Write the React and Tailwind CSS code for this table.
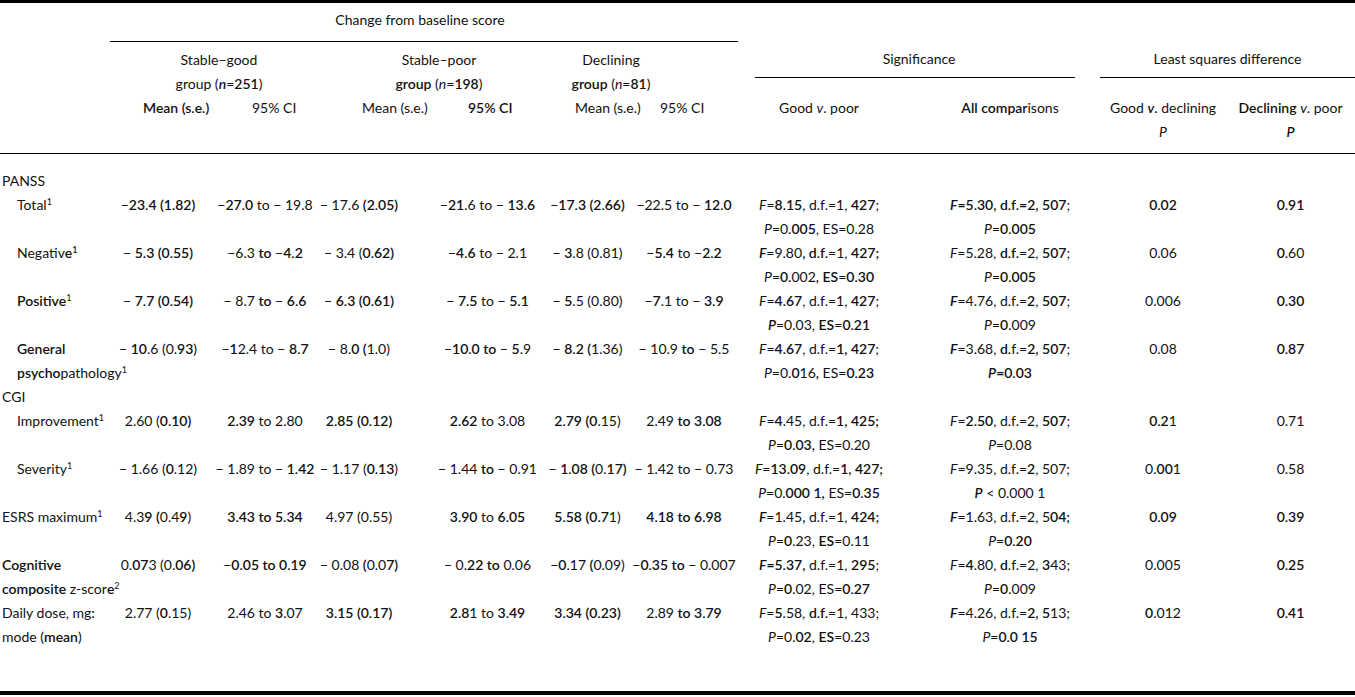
import React from 'react';

// tiny markup: **bold**, _italic_, ^1 superscript
function sup(str, k) {
  return str.split(/(\^\d)/g).map((p, i) =>
    /^\^\d$/.test(p) ? <sup key={k + '-' + i} className="text-[9px]">{p.slice(1)}</sup> : p
  );
}

function ital(str, k) {
  return str.split(/(_[^_]+_)/g).map((p, i) =>
    /^_[^_]+_$/.test(p) ? (
      <i key={k + '-' + i}>{sup(p.slice(1, -1), k + '-' + i)}</i>
    ) : (
      <React.Fragment key={k + '-' + i}>{sup(p, k + '-' + i)}</React.Fragment>
    )
  );
}

function rich(str) {
  if (!str) return null;
  return str.split(/(\*\*[^*]+\*\*)/g).map((p, i) =>
    /^\*\*[^*]+\*\*$/.test(p) ? (
      <b key={i} className="font-semibold">{ital(p.slice(2, -2), 'b' + i)}</b>
    ) : (
      <React.Fragment key={i}>{ital(p, 'n' + i)}</React.Fragment>
    )
  );
}

const rows = [
  { group: 'PANSS' },
  {
    label: ['Total^1'], indent: true,
    c: ['−**23.4 (1.82)**', '−**27.0** to − 19.8', '− 17.6 **(2.05)**', '−**21.**6 to − **13.6**', '−**17.3 (2.66)**', '−22.5 to − **12.0**'],
    s1: ['_F_=**8.15**, d.f.=1, **427**;', '_P_=0.**005**, ES=0.28'],
    s2: ['**_F_=5.30, d.f.=2, 507**;', '_P_=**0.005**'],
    p1: '**0.02**', p2: '**0.91**',
  },
  {
    label: ['Negativ**e^1**'], indent: true,
    c: ['− **5.3 (0.55)**', '−6.3 **to** −**4.2**', '− 3.4 (**0.62)**', '−**4.6** to − 2.1', '− **3**.8 (0.81)', '−**5.4** to −**2.2**'],
    s1: ['**_F_**=9.80**, d.f.**=1, **427;**', '_P_=**0.**002**, ES**=**0.30**'],
    s2: ['_F_=5.28, **d.f.**=2, **507**;', '_P_=**0.005**'],
    p1: '0.06', p2: '**0**.60',
  },
  {
    label: ['**Positive**^1'], indent: true,
    c: ['− **7.7 (0.54)**', '− 8.7 **to** − **6.6**', '− **6.3 (0.61)**', '− **7.5** to − **5.1**', '− **5**.5 (0.80)', '−**7**.1 to − **3.9**'],
    s1: ['_F_=**4.67**, d.f.=1, **427**;', '**_P_**=0.03, **ES**=**0.21**'],
    s2: ['**_F_**=4.76, d.f.=**2**, **507**;', '_P_=**0**.009'],
    p1: '0.006', p2: '**0.30**',
  },
  {
    label: ['**General**', '**psycho**pathology^1'], indent: true,
    c: ['− **10**.6 (0.**93**)', '−**1**2.4 to − **8.7**', '− 8.**0 (**1.0)', '−**10.0 to** − **5**.9', '− **8.2 (**1.36)', '− 10.9 **to** − 5.5'],
    s1: ['_F_=**4.67**, d.f.=**1, 427**;', '_P_=0.**0**16**,** ES=**0.23**'],
    s2: ['**_F_**=3.68, **d.**f.=**2, 507**;', '**_P_=0.03**'],
    p1: '0.08', p2: '**0.87**',
  },
  { group: 'CGI' },
  {
    label: ['Improvement^1'], indent: true,
    c: ['2.60 (**0.10)**', '**2.39** to 2.80', '**2.85 (0.12)**', '**2.62** to 3.08', '**2.79 (0**.15)', '2.49 **to 3.08**'],
    s1: ['_F_=**4**.45, d.f.=**1, 425;**', '_P_=**0.03,** ES=0.20'],
    s2: ['_F_=**2.50**, d.f.=2, **507**;', '_P_=0.08'],
    p1: '**0.2**1', p2: '0.71',
  },
  {
    label: ['Severity^1'], indent: true,
    c: ['− 1.66 (**0**.12)', '− 1.89 to − **1.42**', '− 1.17 (**0.13**)', '− 1.44 **to** − 0.91', '− **1.08 (**0.**17)**', '− 1.42 to − 0.73'],
    s1: ['_F_=**13.09**, d.f.=**1, 427;**', '_P_=0.**000 1,** ES=**0.35**'],
    s2: ['_F_=9.35, d.f.=**2**, 507;', '**_P_** < 0.000 1'],
    p1: '0.**00**1', p2: '0.58',
  },
  {
    label: ['ESRS maximum^1'],
    c: ['4.3**9 (**0.4**9**)', '**3.43 to 5.34**', '4.97 (0.55)', '**3.90** to **6.05**', '**5.58 (0.7**1)', '**4.18 to 6.98**'],
    s1: ['**_F_**=1.45**,** d.f.=1, **424;**', '_P_=**0**.23, **ES**=0.11'],
    s2: ['**_F_**=1.63, d.f.=2, 5**04;**', '_P_=**0.20**'],
    p1: '**0.09**', p2: '**0.39**',
  },
  {
    label: ['**Cognitive**', '**composite** z-scor**e**^2'],
    c: ['0.**07**3 (0.**06)**', '−**0.05 to 0.19**', '− 0.08 **(**0.0**7)**', '− 0.**22 to** 0.06', '−**0**.17 **(**0.09)', '−**0.35 to** − 0.007'],
    s1: ['**_F_=5.37,** d.f.=1, **295**;', '_P_=**0**.02, ES=**0.27**'],
    s2: ['_F_=**4**.80, **d**.f.=2, **3**43;', '_P_=**0**.009'],
    p1: '0.005', p2: '**0.25**',
  },
  {
    label: ['Daily dose, mg**:**', 'mode (**mean**)'],
    c: ['2.77 (**0**.15)', '2.46 to **3**.07', '**3.15 (0.17)**', '**2.8**1 to **3.49**', '**3.34 (0.23)**', '2.89 **to 3.79**'],
    s1: ['_F_=**5**.58, **d.f.**=1, 433;', '_P_=0.**02**, **ES**=0.23'],
    s2: ['**_F_**=4.26, d.f.=**2, 5**13;', '_P_=**0.0 15**'],
    p1: '**0**.012', p2: '**0.41**',
  },
];

// padding that shifts each data column onto the reference centres
const dataPad = ['', 'pl-[6px]', '', 'pl-[30px]', '', ''];

function Lines({ items }) {
  return items.map((t, i) => (
    <div key={i} className="whitespace-nowrap">{rich(t)}</div>
  ));
}

export default function App() {
  return (
    <div className="w-[1355px] h-[697px] bg-white text-[#111] font-['Lato','Noto_Sans',sans-serif] text-[14px] leading-[24px] overflow-hidden">
      <div className="h-[3px] bg-black" />
      <table className="w-[1355px] table-fixed border-collapse">
        <colgroup>
          <col className="w-[110px]" />
          <col className="w-[96px]" />
          <col className="w-[112px]" />
          <col className="w-[82px]" />
          <col className="w-[145px]" />
          <col className="w-[85px]" />
          <col className="w-[108px]" />
          <col className="w-[162px]" />
          <col className="w-[200px]" />
          <col className="w-[126px]" />
          <col className="w-[129px]" />
        </colgroup>
        <thead>
          <tr>
            <th className="p-0" />
            <th colSpan={6} className="p-0 pr-[8px] h-[38px] pb-[3px] font-normal text-center align-middle border-b border-black">
              Change from baseline score
            </th>
            <th colSpan={4} className="p-0" />
          </tr>
          <tr>
            <th className="p-0" />
            <th colSpan={2} className="p-0 pt-[6px] pl-[10px] font-normal text-center">Stable–good</th>
            <th colSpan={2} className="p-0 pt-[6px] pl-[15px] font-normal text-center">Stable–poor</th>
            <th colSpan={2} className="p-0 pt-[6px] pr-[61px] font-normal text-center">Declining</th>
            <th colSpan={2} rowSpan={2} className="p-0 pt-[6px] font-normal text-center align-top">
              <div>Significance</div>
              <div className="mt-[6px] ml-[17px] mr-[25px] h-px bg-black" />
            </th>
            <th colSpan={2} rowSpan={2} className="p-0 pt-[6px] font-normal text-center align-top">
              <div>Least squares difference</div>
              <div className="mt-[6px] h-px bg-black" />
            </th>
          </tr>
          <tr>
            <th className="p-0" />
            <th colSpan={2} className="p-0 pl-[10px] font-normal text-center whitespace-nowrap">{rich('group (**_n_**=**251**)')}</th>
            <th colSpan={2} className="p-0 pl-[15px] font-normal text-center whitespace-nowrap">{rich('**group** (_n_=**198**)')}</th>
            <th colSpan={2} className="p-0 pr-[61px] font-normal text-center whitespace-nowrap">{rich('**group** (_n_=**81**)')}</th>
          </tr>
          <tr>
            <th className="p-0" />
            <th className="p-0 pl-[33px] font-normal text-left whitespace-nowrap">{rich('**Mean (s.e.)**')}</th>
            <th className="p-0 pl-[46px] font-normal text-left whitespace-nowrap">95% CI</th>
            <th className="p-0 pl-[44px] font-normal text-left whitespace-nowrap">Mean (s.e.)</th>
            <th className="p-0 pl-[68px] font-normal text-left whitespace-nowrap">{rich('**95% CI**')}</th>
            <th className="p-0 pl-[30px] font-normal text-left whitespace-nowrap">Mean (s.e.)</th>
            <th className="p-0 pl-[30px] font-normal text-left whitespace-nowrap">95% CI</th>
            <th className="p-0 font-normal text-center whitespace-nowrap">{rich('Good _v_. poor')}</th>
            <th className="p-0 pl-[20px] font-normal text-center whitespace-nowrap">{rich('**All compar**isons')}</th>
            <th className="p-0 font-normal text-center whitespace-nowrap">{rich('Good **_v_.** declining')}</th>
            <th className="p-0 font-normal text-center whitespace-nowrap">{rich('**Declining** _v_. poor')}</th>
          </tr>
          <tr className="border-b border-black">
            <th colSpan={9} className="p-0 h-[33px]" />
            <th className="p-0 pb-[9px] font-normal text-center align-top"><i>P</i></th>
            <th className="p-0 pb-[9px] font-semibold text-center align-top"><i>P</i></th>
          </tr>
        </thead>
        <tbody>
          {rows.map((r, idx) =>
            r.group ? (
              <tr key={idx}>
                <td colSpan={11} className={`p-0 pl-[2px] align-top ${idx === 0 ? 'pt-[15px]' : ''}`}>
                  {r.group}
                </td>
              </tr>
            ) : (
              <tr key={idx} className="align-top">
                <td className={`p-0 ${r.indent ? 'pl-[17px]' : 'pl-[2px]'}`}>
                  <Lines items={r.label} />
                </td>
                {r.c.map((v, i) => (
                  <td key={i} className={`p-0 text-center ${dataPad[i]}`}>
                    <div className="whitespace-nowrap">{rich(v)}</div>
                  </td>
                ))}
                <td className="p-0 text-center">
                  <Lines items={r.s1} />
                </td>
                <td className="p-0 pl-[20px] text-center">
                  <Lines items={r.s2} />
                </td>
                <td className="p-0 text-center">{rich(r.p1)}</td>
                <td className="p-0 text-center">{rich(r.p2)}</td>
              </tr>
            )
          )}
        </tbody>
      </table>
      <div className="mt-[42px] h-[4px] bg-black" />
    </div>
  );
}
